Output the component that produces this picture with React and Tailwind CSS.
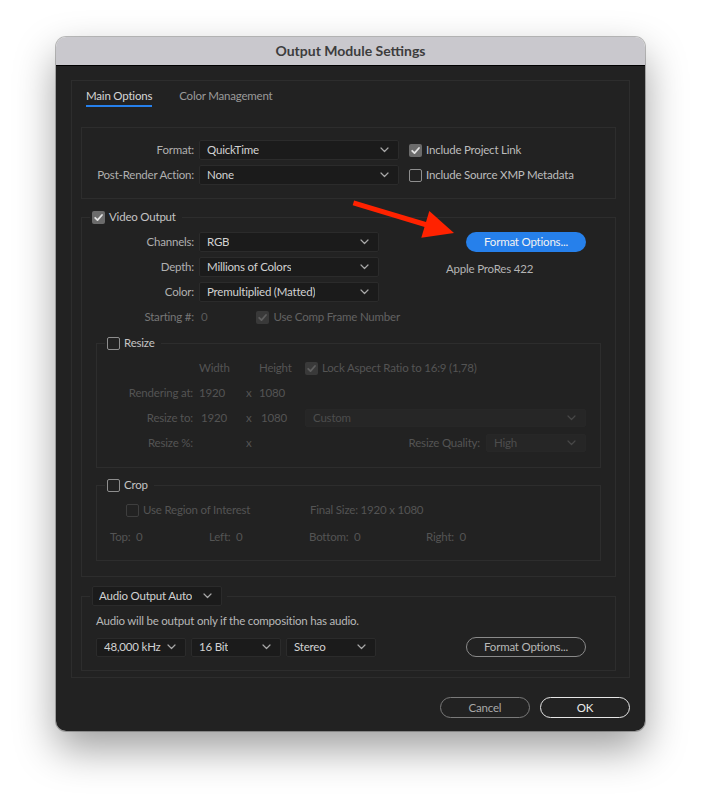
import React from 'react';

const Chevron = ({ color = '#a8a8a8' }) => (
  <svg width="9" height="6" viewBox="0 0 9 6" fill="none">
    <path d="M1 1l3.5 3.5L8 1" stroke={color} strokeWidth="1.2" strokeLinecap="round" strokeLinejoin="round" />
  </svg>
);

const Check = ({ color }) => (
  <svg width="11" height="11" viewBox="0 0 11 11" fill="none">
    <path d="M2.2 5.8l2.3 2.3L9 3" stroke={color} strokeWidth="1.8" strokeLinecap="round" strokeLinejoin="round" />
  </svg>
);

const Checkbox = ({ checked, disabled }) => {
  if (checked) {
    return (
      <span className={`flex items-center justify-center w-[13px] h-[13px] rounded-[2px] shrink-0 ${disabled ? 'bg-[#393939]' : 'bg-[#6b6b6b]'}`}>
        <Check color={disabled ? '#5e5e5e' : '#e2e2e2'} />
      </span>
    );
  }
  return (
    <span className={`block w-[13px] h-[13px] rounded-[2px] shrink-0 border-[1.5px] ${disabled ? 'border-[#3e3e3e]' : 'border-[#8e8e8e]'}`} />
  );
};

const Select = ({ value, className = '', disabled, h = 'h-[20px]' }) => (
  <div
    className={`flex items-center justify-between ${h} pl-[7px] pr-[9px] rounded-[2px] border ${
      disabled ? 'bg-[#262626] border-[#272727] text-[#4d4d4d]' : 'bg-[#1b1b1b] border-[#2b2b2b] text-[#d2d2d2]'
    } ${className}`}
  >
    <span className="truncate">{value}</span>
    <Chevron color={disabled ? '#474747' : '#a8a8a8'} />
  </div>
);

const Label = ({ children, className = '' }) => (
  <div className={`text-right text-[#b0b0b0] ${className}`}>{children}</div>
);

const App = () => {
  return (
    <div className="relative min-h-[806px] w-[701px] bg-white pt-[37px] pl-[56px] font-['Lato','Liberation_Sans',sans-serif] text-[11.5px] tracking-[-0.2px] leading-[16px]">
      <div className="w-[589px] rounded-[10px] overflow-hidden shadow-[0_18px_40px_rgba(0,0,0,0.38),0_0_0_1px_rgba(0,0,0,0.25)]">
        {/* title bar */}
        <div className="h-[29px] flex items-center justify-center bg-[#c9c8cd] border-b border-black text-[14px] tracking-normal font-bold text-[#3d3d3d]">
          Output Module Settings
        </div>

        <div className="bg-[#222222] px-[15px] pt-[14px] pb-[13px]">
          <div className="border border-[#2d2d2d] pb-[6px]">
            {/* tabs */}
            <div className="flex gap-[27px] pl-[14px] pt-[7px]">
              <div className="pb-[1px] border-b-2 border-[#2680eb] text-[#d6d6d6]">Main Options</div>
              <div className="text-[#9a9a9a]">Color Management</div>
            </div>

            {/* format box */}
            <div className="mt-[20px] ml-[9px] mr-[13px] border border-[#2d2d2d] pt-[12px] pb-[13px] flex flex-col gap-[5px]">
              <div className="flex items-center">
                <Label className="w-[112px]">Format:</Label>
                <Select value="QuickTime" className="ml-[5px] w-[200px]" />
                <div className="ml-[10px] flex items-center gap-[4px] text-[#bdbdbd]">
                  <Checkbox checked />
                  <span>Include Project Link</span>
                </div>
              </div>
              <div className="flex items-center">
                <Label className="w-[112px]">Post-Render Action:</Label>
                <Select value="None" className="ml-[5px] w-[200px]" />
                <div className="ml-[10px] flex items-center gap-[4px] text-[#bdbdbd]">
                  <Checkbox />
                  <span>Include Source XMP Metadata</span>
                </div>
              </div>
            </div>

            {/* video output */}
            <fieldset className="mt-[10px] ml-[9px] mr-[13px] border border-[#2d2d2d] pb-[15px]">
              <legend className="ml-[8px] pl-[2px] pr-[6px]">
                <div className="flex items-center gap-[4px] h-[16px] text-[#c4c4c4]">
                  <Checkbox checked />
                  <span>Video Output</span>
                </div>
              </legend>

              <div className="flex pt-[7px]">
                <div className="flex flex-col gap-[5px] w-[297px]">
                  <div className="flex items-center">
                    <Label className="w-[112px]">Channels:</Label>
                    <Select value="RGB" className="ml-[5px] w-[180px]" />
                  </div>
                  <div className="flex items-center">
                    <Label className="w-[112px]">Depth:</Label>
                    <Select value="Millions of Colors" className="ml-[5px] w-[180px]" />
                  </div>
                  <div className="flex items-center">
                    <Label className="w-[112px]">Color:</Label>
                    <Select value="Premultiplied (Matted)" className="ml-[5px] w-[180px]" />
                  </div>
                </div>
                <div className="ml-[67px] flex flex-col">
                  <button className="ml-[20px] w-[120px] h-[20px] rounded-full bg-[#2680eb] text-[#f2f2f2]">
                    Format Options...
                  </button>
                  <div className="mt-[9px] text-[#b4b4b4]">Apple ProRes 422</div>
                </div>
              </div>

              <div className="flex items-center h-[20px] mt-[5px]">
                <Label className="w-[112px] !text-[#767676]">Starting #:</Label>
                <span className="ml-[7px] text-[#5a5a5a]">0</span>
                <div className="ml-[49px] flex items-center gap-[4px] text-[#626262]">
                  <Checkbox checked disabled />
                  <span>Use Comp Frame Number</span>
                </div>
              </div>

              {/* resize */}
              <fieldset className="mt-[8px] mx-[14px] border border-[#2d2d2d] pt-[7px] pb-[15px]">
                <legend className="ml-[8px] pl-[2px] pr-[6px]">
                  <div className="flex items-center gap-[4px] h-[16px] text-[#c4c4c4]">
                    <Checkbox />
                    <span>Resize</span>
                  </div>
                </legend>
                <div className="flex flex-col gap-[5px] text-[#545454]">
                  <div className="flex items-center h-[20px]">
                    <div className="w-[102px]" />
                    <div className="w-[60px]">Width</div>
                    <div className="w-[46px]">Height</div>
                    <div className="flex items-center gap-[4px]">
                      <Checkbox checked disabled />
                      <span>Lock Aspect Ratio to 16:9 (1,78)</span>
                    </div>
                  </div>
                  <div className="flex items-center h-[20px]">
                    <Label className="w-[96px] !text-[#545454]">Rendering at:</Label>
                    <div className="ml-[6px] w-[47px]">1920</div>
                    <div className="w-[13px]">x</div>
                    <div className="w-[46px]">1080</div>
                  </div>
                  <div className="flex items-center h-[20px]">
                    <Label className="w-[96px] !text-[#545454]">Resize to:</Label>
                    <div className="ml-[8px] w-[45px]">1920</div>
                    <div className="w-[15px]">x</div>
                    <div className="w-[44px]">1080</div>
                    <Select value="Custom" disabled h="h-[18px]" className="w-[281px]" />
                  </div>
                  <div className="flex items-center h-[19px]">
                    <Label className="w-[96px] !text-[#545454]">Resize %:</Label>
                    <div className="ml-[6px] w-[47px]" />
                    <div className="w-[13px]">x</div>
                    <Label className="w-[221px] !text-[#545454]">Resize Quality:</Label>
                    <Select value="High" disabled h="h-[18px]" className="ml-[6px] w-[100px]" />
                  </div>
                </div>
              </fieldset>

              {/* crop */}
              <fieldset className="mt-[9px] mx-[14px] border border-[#2d2d2d] pt-[9px] pb-[15px] text-[#545454]">
                <legend className="ml-[8px] pl-[2px] pr-[6px]">
                  <div className="flex items-center gap-[4px] h-[16px] text-[#c4c4c4]">
                    <Checkbox />
                    <span>Crop</span>
                  </div>
                </legend>
                <div className="flex items-center h-[16px]">
                  <div className="ml-[29px] w-[184px] flex items-center gap-[4px]">
                    <Checkbox disabled />
                    <span>Use Region of Interest</span>
                  </div>
                  <span>Final Size: 1920 x 1080</span>
                </div>
                <div className="flex items-center h-[16px] mt-[11px]">
                  <div className="ml-[13px] w-[99px]">Top:&nbsp; 0</div>
                  <div className="w-[100px]">Left:&nbsp; 0</div>
                  <div className="w-[117px]">Bottom:&nbsp; 0</div>
                  <div>Right:&nbsp; 0</div>
                </div>
              </fieldset>
            </fieldset>

            {/* audio */}
            <fieldset className="mt-[9px] ml-[9px] mr-[13px] border border-[#2d2d2d] pt-[7px] pb-[13px]">
              <legend className="ml-[8px] pl-[2px] pr-[5px]">
                <Select value="Audio Output Auto" className="w-[130px] !pl-[6px]" />
              </legend>
              <div className="pl-[14px] text-[#b8b8b8]">Audio will be output only if the composition has audio.</div>
              <div className="flex items-center mt-[8px] pl-[14px]">
                <Select value="48,000 kHz" h="h-[19px]" className="w-[90px]" />
                <Select value="16 Bit" h="h-[19px]" className="ml-[5px] w-[90px]" />
                <Select value="Stereo" h="h-[19px]" className="ml-[5px] w-[90px]" />
                <button className="ml-[90px] w-[120px] h-[20px] rounded-full border-[1.5px] border-[#8a8a8a] text-[#b8b8b8]">
                  Format Options...
                </button>
              </div>
            </fieldset>
          </div>

          {/* bottom buttons */}
          <div className="flex justify-end gap-[10px] mt-[19px]">
            <button className="w-[90px] h-[21px] rounded-full border-[1.5px] border-[#7a7a7a] text-[#a8a8a8]">Cancel</button>
            <button className="w-[90px] h-[21px] rounded-full border-[1.5px] border-[#e6e6e6] text-[#ececec]">OK</button>
          </div>
        </div>
      </div>

      {/* red annotation arrow */}
      <svg className="absolute left-0 top-0 pointer-events-none" width="701" height="806" viewBox="0 0 701 806">
        <line x1="353.4" y1="202.9" x2="427" y2="225" stroke="#ff2200" strokeWidth="5" />
        <polygon points="454,233 429.3,211 421.3,237.8" fill="#ff2200" />
      </svg>
    </div>
  );
};

export default App;
